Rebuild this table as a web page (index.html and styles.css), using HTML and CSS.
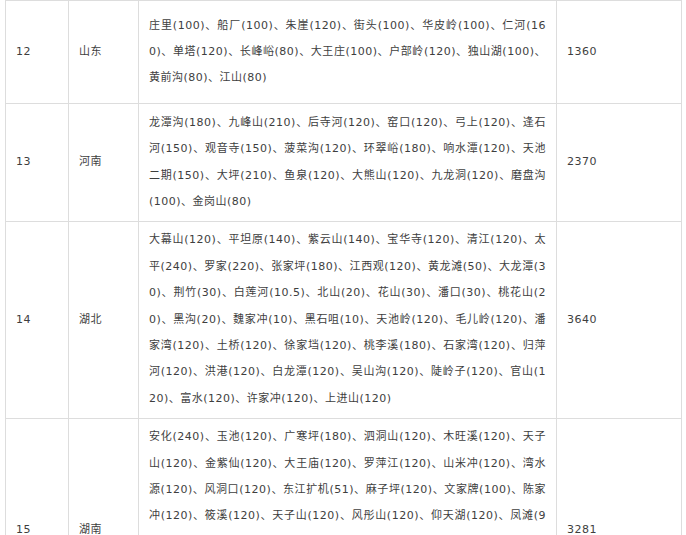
FILE: index.html
```html
<!DOCTYPE html>
<html lang="zh-CN">
<head>
<meta charset="utf-8">
<title>抽水蓄能电站</title>
<link rel="stylesheet" href="styles.css">
</head>
<body>
<table class="grid">
  <colgroup>
    <col class="c-no">
    <col class="c-prov">
    <col class="c-list">
    <col class="c-cap">
  </colgroup>
  <tbody>
    <tr class="row-first">
      <td>12</td>
      <td>山东</td>
      <td class="list">庄里(100)、船厂(100)、朱崖(120)、街头(100)、华皮岭(100)、仁河(160)、单塔(120)、长峰峪(80)、大王庄(100)、户部岭(120)、独山湖(100)、黄前沟(80)、江山(80)</td>
      <td>1360</td>
    </tr>
    <tr>
      <td>13</td>
      <td>河南</td>
      <td class="list">龙潭沟(180)、九峰山(210)、后寺河(120)、窑口(120)、弓上(120)、逢石河(150)、观音寺(150)、菠菜沟(120)、环翠峪(180)、响水潭(120)、天池二期(150)、大坪(210)、鱼泉(120)、大熊山(120)、九龙洞(120)、磨盘沟(100)、金岗山(80)</td>
      <td>2370</td>
    </tr>
    <tr>
      <td>14</td>
      <td>湖北</td>
      <td class="list">大幕山(120)、平坦原(140)、紫云山(140)、宝华寺(120)、清江(120)、太平(240)、罗家(220)、张家坪(180)、江西观(120)、黄龙滩(50)、大龙潭(30)、荆竹(30)、白莲河(10.5)、北山(20)、花山(30)、潘口(30)、桃花山(20)、黑沟(20)、魏家冲(10)、黑石咀(10)、天池岭(120)、毛儿岭(120)、潘家湾(120)、土桥(120)、徐家垱(120)、桃李溪(180)、石家湾(120)、归萍河(120)、洪港(120)、白龙潭(120)、吴山沟(120)、陡岭子(120)、官山(120)、富水(120)、许家冲(120)、上进山(120)</td>
      <td>3640</td>
    </tr>
    <tr>
      <td>15</td>
      <td>湖南</td>
      <td class="list">安化(240)、玉池(120)、广寒坪(180)、泗洞山(120)、木旺溪(120)、天子山(120)、金紫仙(120)、大王庙(120)、罗萍江(120)、山米冲(120)、湾水源(120)、风洞口(120)、东江扩机(51)、麻子坪(120)、文家牌(100)、陈家冲(120)、筱溪(120)、天子山(120)、风彤山(120)、仰天湖(120)、凤滩(90)、平江(140)、汨罗(120)、沅陵(120)、宁乡(120)、攸县(120)、辰溪(120)、南岳(120)、岳阳(120)、石门(120)、桃源(120)、新化(120)、溆浦(120)、江华(120)、通道(120)、城步(120)、绥宁(120)、洞口(120)、隆回(120)、永顺(120)</td>
      <td>3281</td>
    </tr>
  </tbody>
</table>
</body>
</html>
```

FILE: styles.css
```css
html,
body {
  margin: 0;
  background: #ffffff;
}

body {
  font-family: "DejaVu Sans", "Noto Sans CJK SC", sans-serif;
  font-size: 11px;
  letter-spacing: 0.5px;
  color: #3e3e3e;
}

.grid {
  border-collapse: collapse;
  table-layout: fixed;
  width: 677px;
  margin-left: 5px;
}

.c-no { width: 63px; }
.c-prov { width: 70px; }
.c-list { width: 418px; }
.c-cap { width: 125px; }

.grid td {
  border: 1px solid #dddddd;
  padding: 5.5px 10px;
  line-height: 26.4px;
  vertical-align: middle;
  word-break: break-all;
}

.grid .row-first td {
  padding-top: 11.5px;
  padding-bottom: 11.5px;
}

.grid .list {
  text-align: justify;
}
```
